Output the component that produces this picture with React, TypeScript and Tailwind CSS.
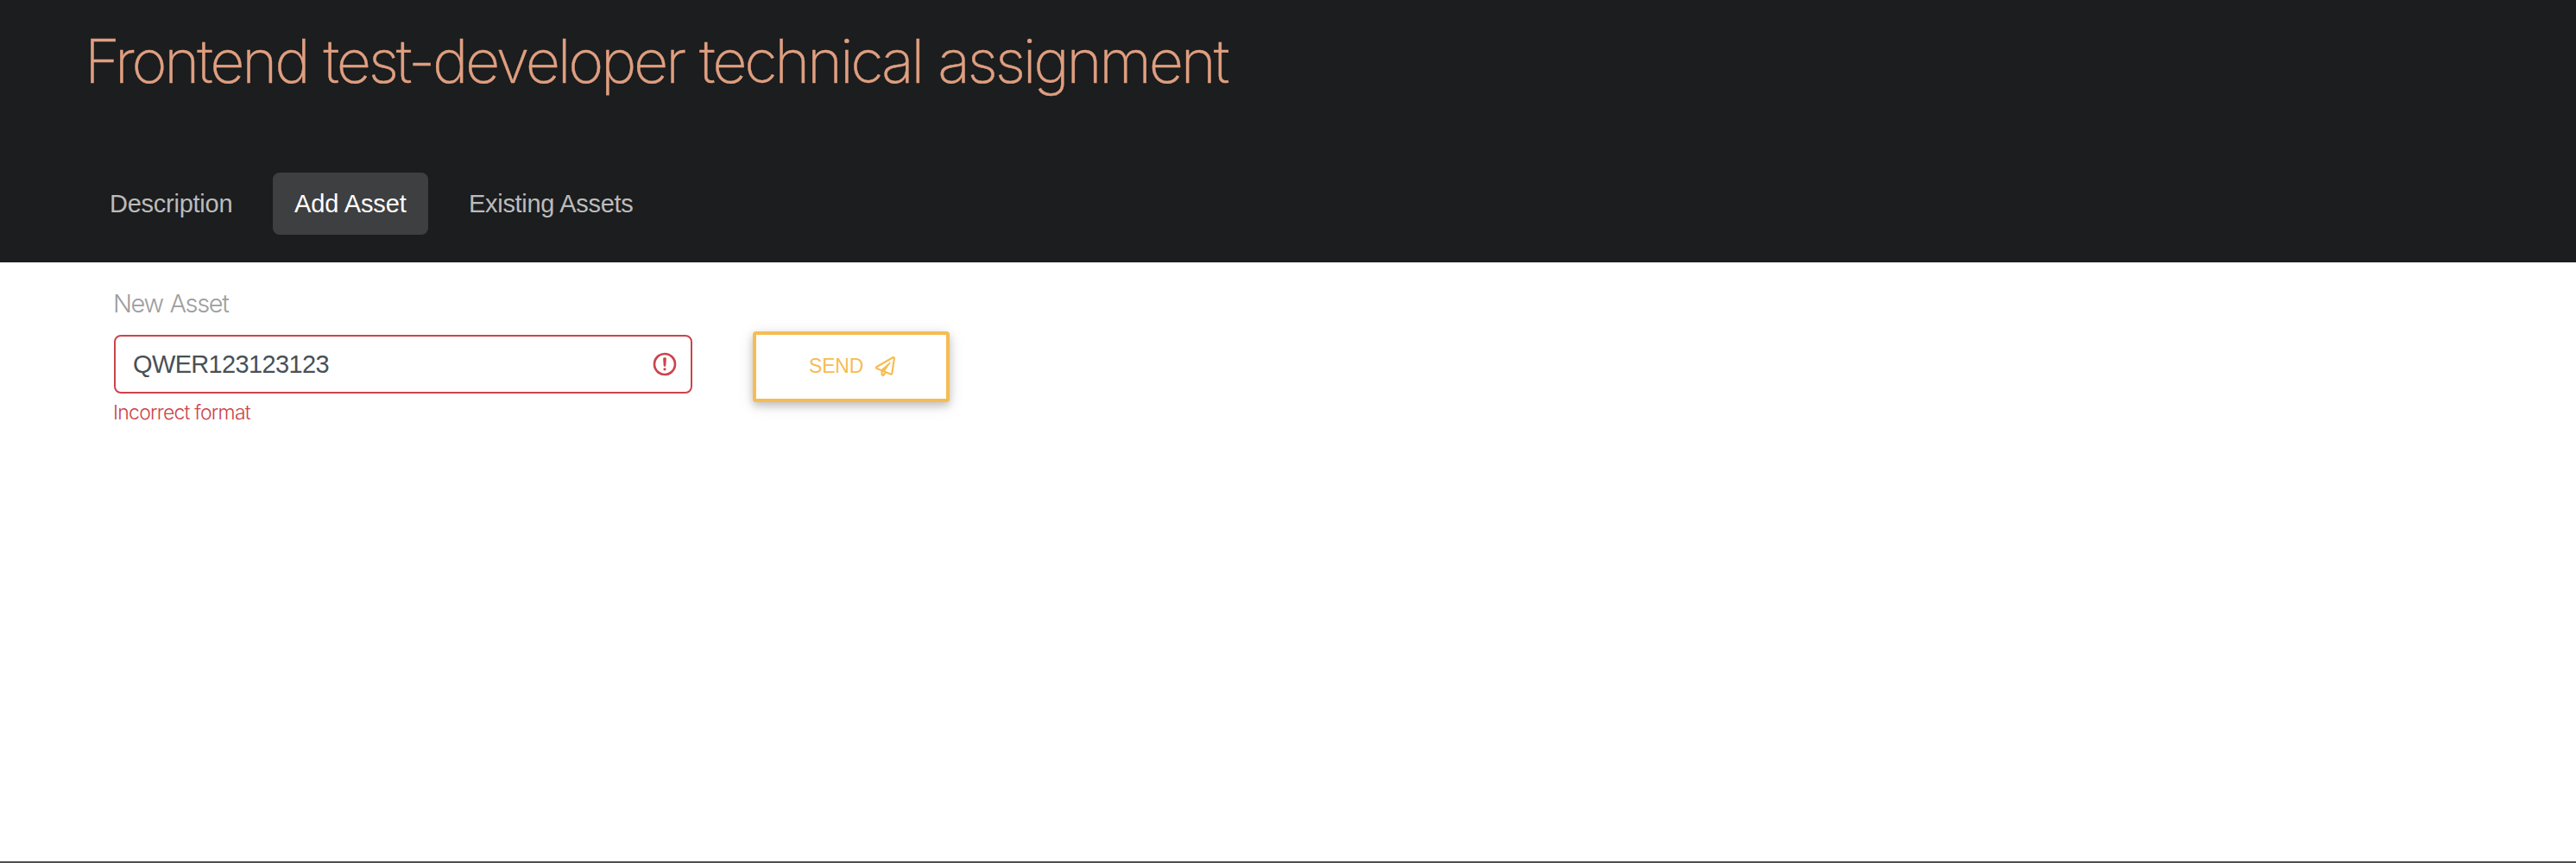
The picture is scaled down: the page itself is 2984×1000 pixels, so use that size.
import { useState } from "react";
import { FaRegPaperPlane } from "react-icons/fa";

const tabs = [
  { name: "Description", width: "w-[191px] pl-[25px]", tracking: "tracking-[-0.25px]" },
  { name: "Add Asset", width: "w-[180px] pl-[25px]", tracking: "tracking-[-0.1px]" },
  { name: "Existing Assets", width: "w-[240px] pl-[24px]", tracking: "tracking-[-0.3px]" },
];

function AlertIcon() {
  return (
    <svg viewBox="0 0 12 12" className="size-8 shrink-0" fill="none" stroke="currentColor">
      <circle cx="6" cy="6" r="4.5" />
      <path strokeLinejoin="round" d="M5.8 3.6h.4L6 6.5z" />
      <circle cx="6" cy="8.2" r=".6" fill="currentColor" stroke="none" />
    </svg>
  );
}

export default function App() {
  const [active, setActive] = useState("Add Asset");
  const [value, setValue] = useState("QWER123123123");

  return (
    <div className="flex h-[1000px] flex-col border-b-2 border-[#4f4d50] bg-white font-['Liberation_Sans',sans-serif]">
      <header className="h-[304px] shrink-0 bg-[#1b1d1e] pl-[98px]">
        <h1 className="h-[200px] pt-[27px] font-['Inter',sans-serif] text-[70px] leading-[88px] font-extralight tracking-[-3.25px] [word-spacing:1.8px] whitespace-nowrap text-[#e09f80] [-webkit-text-stroke:0.4px_#e09f80]">
          Frontend test-developer technical assignment
        </h1>
        <nav className="ml-[4px] flex gap-[23px]">
          {tabs.map((t) => (
            <button
              key={t.name}
              onClick={() => setActive(t.name)}
              className={`h-[72px] rounded-lg text-left text-[29px] leading-[72px] whitespace-nowrap ${t.tracking} ${t.width} ${
                active === t.name ? "bg-[#3e3f40] text-white" : "text-[#bbbbbc]"
              }`}
            >
              {t.name}
            </button>
          ))}
        </nav>
      </header>
      <main className="flex pl-[132px]">
        <div className="w-[670px] pt-[30px] font-['Inter',sans-serif] font-light">
          <label className="block -translate-x-px text-[29px] leading-9 tracking-[-1.4px] [word-spacing:1px] text-[#9e9e9e]">New Asset</label>
          <div className="mt-[18px] flex h-[68px] items-center rounded-lg border-2 border-[#cc444b] pr-[14px] pl-5 text-[#cc444b]">
            <input
              value={value}
              onChange={(e) => setValue(e.target.value)}
              className="min-w-0 flex-1 font-['Liberation_Sans',sans-serif] text-[29px] leading-9 font-normal tracking-[-0.65px] text-[#495057] outline-none"
            />
            <AlertIcon />
          </div>
          <p className="mt-2 -translate-x-px text-[23px] leading-7 tracking-[-0.76px] text-[#cc444b]">Incorrect format</p>
        </div>
        <button className="mt-20 ml-[70px] flex h-[82px] w-[228px] items-center rounded border-4 border-[#f6bc52] bg-white pl-[61px] text-[23px] text-[#f6bc52] shadow-[0_4px_10px_rgba(0,0,0,0.2),0_4px_20px_rgba(0,0,0,0.1)]">
          <span className="-mt-px tracking-[-0.2px]">SEND</span>
          <FaRegPaperPlane className="-mt-0.5 ml-[14px] size-[23px]" />
        </button>
      </main>
    </div>
  );
}
